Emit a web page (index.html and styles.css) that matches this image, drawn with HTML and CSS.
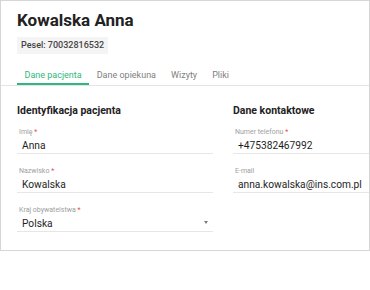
FILE: index.html
```html
<!DOCTYPE html>
<html lang="pl">
<head>
<meta charset="utf-8">
<link rel="stylesheet" href="styles.css">
</head>
<body>
<div class="card">
  <header class="header">
    <h1 class="name">Kowalska Anna</h1>
    <div class="chip">Pesel: 70032816532</div>
  </header>
  <nav class="tabs">
    <span class="tab active">Dane pacjenta</span>
    <span class="tab">Dane opiekuna</span>
    <span class="tab">Wizyty</span>
    <span class="tab">Pliki</span>
  </nav>
  <div class="content">
    <section class="col">
      <h2 class="section-title">Identyfikacja pacjenta</h2>
      <div class="field">
        <div class="label">Imię <span class="req">*</span></div>
        <div class="value">Anna</div>
      </div>
      <div class="field">
        <div class="label">Nazwisko <span class="req">*</span></div>
        <div class="value">Kowalska</div>
      </div>
      <div class="field select">
        <div class="label">Kraj obywatelstwa <span class="req">*</span></div>
        <div class="value">Polska</div>
        <span class="arrow"></span>
      </div>
    </section>
    <section class="col">
      <h2 class="section-title">Dane kontaktowe</h2>
      <div class="field">
        <div class="label">Numer telefonu <span class="req">*</span></div>
        <div class="value">+475382467992</div>
      </div>
      <div class="field">
        <div class="label">E-mail</div>
        <div class="value">anna.kowalska@ins.com.pl</div>
      </div>
    </section>
  </div>
</div>
</body>
</html>
```

FILE: styles.css
```css
* { box-sizing: border-box; }
html, body { margin: 0; padding: 0; background: #fff; }
body { font-family: Roboto, "Noto Sans", sans-serif; color: #212121; }

.card {
  width: 370px;
  height: 251px;
  border: 1px solid #d6d6d6;
  overflow: hidden;
}

.header { padding: 8px 16px 0; }
.name {
  margin: 0;
  font-size: 17px;
  font-weight: 700;
  line-height: 22px;
  color: #222;
}
.chip {
  display: inline-block;
  margin-top: 6px;
  padding: 2px 4px;
  background: #f4f4f4;
  font-size: 9px;
  line-height: 13px;
  font-weight: 500;
  color: #444;
}

.tabs {
  display: flex;
  margin-top: 13px;
  padding: 0 16px;
  border-bottom: 1px solid #e4e4e4;
}
.tab {
  padding: 0 7.5px;
  font-size: 9px;
  line-height: 16px;
  border-bottom: 2px solid transparent;
  color: #808080;
}
.tab.active {
  color: #30b77c;
  border-bottom-color: #30b77c;
}

.content {
  display: grid;
  grid-template-columns: 196px 196px;
  column-gap: 20px;
  padding: 0 16px;
  width: 460px;
}
.col {
  display: flex;
  flex-direction: column;
  gap: 13px;
}
.section-title {
  margin: 18px 0 -3px;
  font-size: 10.5px;
  font-weight: 700;
  line-height: 14px;
  color: #222;
}
.field {
  position: relative;
  border-bottom: 1px solid #e6e6e6;
}
.label {
  padding-left: 2px;
  font-size: 7px;
  line-height: 9px;
  color: #9e9e9e;
}
.req { color: #f0463c; }
.value {
  padding-left: 5px;
  margin-top: 2px;
  font-size: 10.2px;
  line-height: 14px;
  color: #1e1e1e;
}
.arrow {
  position: absolute;
  right: 5px;
  top: 15px;
  width: 0;
  height: 0;
  border-left: 2.5px solid transparent;
  border-right: 2.5px solid transparent;
  border-top: 3px solid #7a7a7a;
}
```
